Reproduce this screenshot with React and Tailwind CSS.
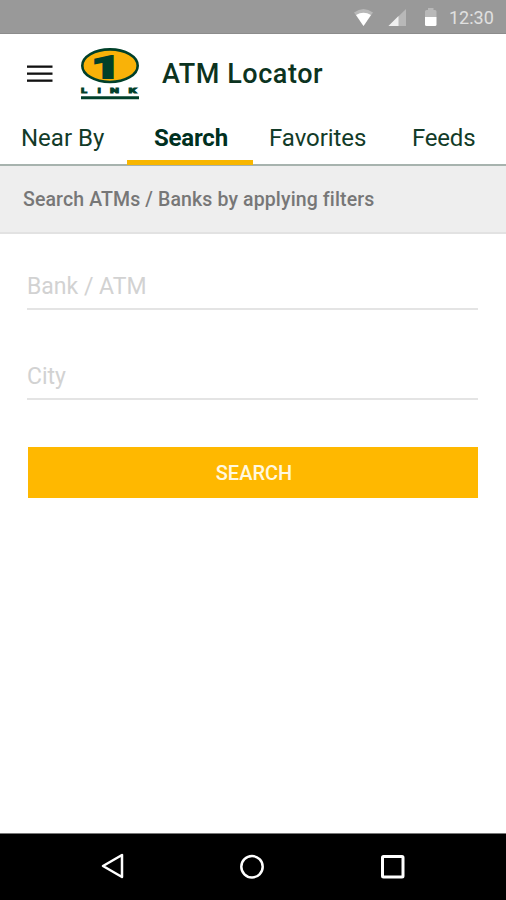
import React from 'react';

const tabs = [
  { label: 'Near By', width: 'w-[127px]', pad: 'pl-[21px]', tracking: 'tracking-[0px]' },
  { label: 'Search', width: 'w-[126px]', pad: 'pl-[27px]', tracking: 'tracking-[-0.2px]', active: true },
  { label: 'Favorites', width: 'w-[127px]', pad: 'pl-[16px]', tracking: 'tracking-[-0.05px]' },
  { label: 'Feeds', width: 'w-[126px]', pad: 'pl-[32px]', tracking: 'tracking-[-0.2px]' },
];

const StatusBar = () => (
  <div className="h-[34px] shrink-0 bg-[#999999] border-b border-[#8c8c8c] flex items-center">
    <svg className="ml-[352px] shrink-0" width="90" height="34" viewBox="352 0 90 34">
      <path d="M354 12.5Q363.500 5.500 373 12.500L363.500 26Z" fill="#b8b8b8" />
      <path d="M356 15Q363.500 10.500 371 15L363.500 26Z" fill="#fff" />
      <path d="M388.500 26L406 9V26Z" fill="#b8b8b8" />
      <path d="M388.500 26L398.500 16V26Z" fill="#f0f0f0" />
      <path d="M425 17V11.500Q425 10 426.500 10H428V8H433.500V10H435Q436.500 10 436.500 11.500V17Z" fill="#b8b8b8" />
      <path d="M425 17H436.500V24.500Q436.500 26 435 26H426.500Q425 26 425 24.500Z" fill="#fff" />
    </svg>
    <span className="ml-[7px] mt-[3px] text-[18px] leading-6 text-[#e0e0e0]">12:30</span>
  </div>
);

const Logo = () => (
  <svg width="60" height="54" viewBox="80 46 60 54">
    <ellipse cx="110" cy="64.700" rx="27.700" ry="16.300" fill="#f9b208" stroke="#00402a" strokeWidth="2.600" />
    <text
      transform="translate(91.500 76.500) scale(1.600 1)"
      fontFamily="Roboto"
      fontWeight="900"
      fontSize="31.500"
      fill="#00402a"
      stroke="#00402a"
      strokeWidth="1.800"
    >
      1
    </text>
    <g fontFamily="Roboto" fontWeight="900" fontSize="8" fill="#00402a" stroke="#00402a" strokeWidth="0.800">
      <text transform="translate(81 91.500) scale(1.400 1)">L</text>
      <text transform="translate(97.500 91.500) scale(1.400 1)">I</text>
      <text transform="translate(110 91.500) scale(1.600 1)">N</text>
      <text transform="translate(128.500 91.500) scale(1.600 1)">K</text>
    </g>
    <path d="M81 96.800H139" stroke="#00402a" strokeWidth="3" />
  </svg>
);

const Header = () => (
  <header className="h-[80px] shrink-0 flex items-center">
    <button className="ml-[27px] w-[26px]" aria-label="Menu">
      <svg width="26" height="18" viewBox="0 0 26 18" fill="#111">
        <rect y="0.500" width="25.500" height="2.300" />
        <rect y="7.500" width="25.500" height="2.300" />
        <rect y="14.500" width="25.500" height="2.300" />
      </svg>
    </button>
    <div className="ml-[27px]">
      <Logo />
    </div>
    <h1 className="ml-[22px] text-[27px] leading-8 font-medium tracking-[0.55px] text-[#0c3320]">ATM Locator</h1>
  </header>
);

const Tabs = () => (
  <nav className="h-[52px] shrink-0 flex border-b-2 border-[#a7b3ae]">
    {tabs.map((tab) => (
      <button
        key={tab.label}
        className={`${tab.width} ${tab.pad} ${tab.tracking} h-[51px] pt-[2px] text-left text-[24px] leading-[44px] whitespace-nowrap ${
          tab.active ? 'font-bold text-[#00301f] border-b-[5px] border-[#f8b600]' : 'pb-[5px] text-[#123b28]'
        }`}
      >
        {tab.label}
      </button>
    ))}
  </nav>
);

const Field = ({ label }) => (
  <input
    type="text"
    placeholder={label}
    className="-ml-px block w-[451px] h-[48px] pt-[2px] border-b-2 border-[#e4e4e4] text-[23px] tracking-[0px] placeholder:text-[#d2d2d2] focus:outline-none"
  />
);

const NavBar = () => (
  <div className="h-[67px] shrink-0 bg-black border-t border-[#777]">
    <svg width="506" height="66" viewBox="0 834 506 66" fill="none" stroke="#fff" strokeWidth="2.500">
      <path d="M103 866L122 855V877Z" strokeLinejoin="round" />
      <circle cx="252" cy="866.700" r="10.700" />
      <rect x="382.500" y="856.500" width="20.500" height="20.500" rx="1" strokeWidth="3" />
    </svg>
  </div>
);

const App = () => {
  return (
    <div className="w-[506px] h-[900px] flex flex-col overflow-hidden bg-white font-['Roboto',sans-serif]">
      <StatusBar />
      <Header />
      <Tabs />
      <div className="h-[68px] shrink-0 pl-[23px] pt-px flex items-center bg-[#eeeeee] border-b-2 border-[#e2e2e2]">
        <p className="text-[19.5px] font-medium tracking-[0.12px] text-[#777]">Search ATMs / Banks by applying filters</p>
      </div>
      <main className="flex-1 pt-[28px] px-[28px]">
        <div className="space-y-[42px]">
          <Field label="Bank / ATM" />
          <Field label="City" />
        </div>
        <button className="mt-[47px] block w-[450px] h-[51px] pl-[2px] pt-px bg-[#ffb800] text-[20px] font-medium text-[#fff8e0]">
          SEARCH
        </button>
      </main>
      <NavBar />
    </div>
  );
};

export default App;
